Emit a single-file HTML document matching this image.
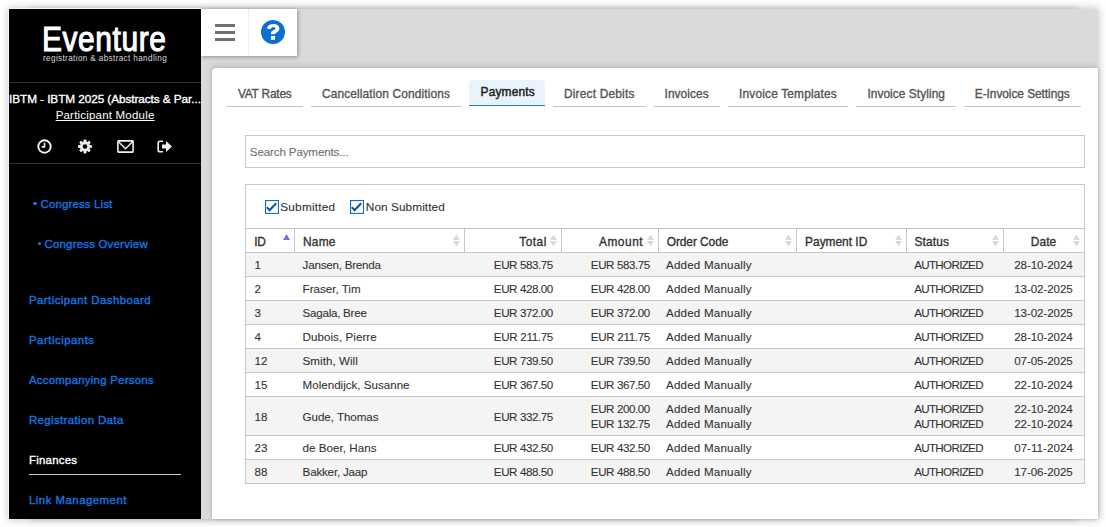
<!DOCTYPE html>
<html><head><meta charset="utf-8">
<style>
html,body{margin:0;padding:0;}
body{width:1106px;height:527px;overflow:hidden;background:#fff;position:relative;font-family:"Liberation Sans", sans-serif;}
.abs{position:absolute;}
</style></head><body>

<div class="abs" style="left:29px;top:9px;width:1049px;height:510px;background:#dadada;box-shadow:0 0 7px 0 rgba(0,0,0,.2);"></div>
<div class="abs" style="left:9px;top:9px;width:1089px;height:510px;background:#dadada;box-shadow:0 0 8px 1px rgba(0,0,0,.22);"></div>
<div class="abs" style="left:8px;top:8px;width:1px;height:511px;background:#f2f2f2;"></div>
<div class="abs" style="left:8px;top:8px;width:193px;height:1px;background:#f2f2f2;"></div>
<div class="abs" style="left:9px;top:9px;width:192px;height:510px;background:#000;overflow:hidden;">
<div class="abs" style="left:32.5px;top:9.5px;font-size:35px;transform:scaleX(0.855);letter-spacing:0.7px;transform-origin:0 0;-webkit-text-stroke:1.1px #fff;color:#fff;line-height:40px;white-space:nowrap;">Eventure</div>
<div class="abs" style="left:34px;top:45px;font-size:8.2px;color:#d8d8d8;line-height:10px;white-space:nowrap;letter-spacing:0.35px;">registration &amp; abstract handling</div>
<div class="abs" style="left:0;top:73px;width:192px;height:1px;background:#333;"></div>
<div style="position:absolute;top:79.91px;line-height:20px;font-size:11.8px;font-weight:normal;color:#fff;white-space:nowrap;left:0px;width:192px;text-align:center;letter-spacing:-0.079px;-webkit-text-stroke:0.35px #fff;text-indent:-0.079px;">IBTM - IBTM 2025 (Abstracts &amp; Par...</div>
<div style="position:absolute;top:96.32px;line-height:20px;font-size:11.5px;font-weight:normal;color:#fff;white-space:nowrap;left:0px;width:192px;text-align:center;letter-spacing:0.2px;text-indent:0.2px;"><span style="text-decoration:underline;text-decoration-skip-ink:none;">Participant Module</span></div>
<svg class="abs" style="left:28px;top:130px" width="15" height="15" viewBox="0 0 15 15"><circle cx="7.5" cy="7.5" r="6.2" fill="none" stroke="#f2f2f2" stroke-width="1.9"/><path d="M7.5 3.8 V7.9 H4.8" fill="none" stroke="#f2f2f2" stroke-width="1.6"/></svg>
<svg class="abs" style="left:69px;top:130px" width="14" height="15" viewBox="0 0 14 15"><g transform="translate(7 7.5)"><g fill="#ececec">
<rect x="-1.5" y="-7" width="3" height="14" rx="1"/><rect x="-1.5" y="-7" width="3" height="14" rx="1" transform="rotate(45)"/><rect x="-1.5" y="-7" width="3" height="14" rx="1" transform="rotate(90)"/><rect x="-1.5" y="-7" width="3" height="14" rx="1" transform="rotate(135)"/>
<circle r="5.1"/></g><circle r="2.3" fill="#000"/></g></svg>
<svg class="abs" style="left:108px;top:131px" width="17" height="13" viewBox="0 0 17 13"><rect x="0.9" y="0.9" width="15.2" height="11.2" rx="0.6" fill="none" stroke="#f0f0f0" stroke-width="1.6"/><path d="M1.3 1.6 L8.5 8.8 L15.7 1.6" fill="none" stroke="#f0f0f0" stroke-width="1.4"/></svg>
<svg class="abs" style="left:148px;top:131px" width="16" height="13" viewBox="0 0 16 13"><path d="M6 1.2 H3 Q1.2 1.2 1.2 3 V10 Q1.2 11.8 3 11.8 H6" fill="none" stroke="#f0f0f0" stroke-width="1.6"/><path d="M5 4.5 H9 V1 L15 6.5 L9 12 V8.5 H5 Z" fill="#f0f0f0"/></svg>
<div class="abs" style="left:0;top:154px;width:192px;height:1px;background:#333;"></div>
<div class="abs" style="left:24.2px;top:192.7px;width:3.6px;height:3.6px;border-radius:50%;background:#1477e0;"></div>
<div style="position:absolute;top:185.05px;line-height:20px;font-size:11.4px;font-weight:normal;color:#1477e0;white-space:nowrap;left:31.5px;letter-spacing:0.175px;-webkit-text-stroke:0.35px #1477e0;">Congress List</div>
<div class="abs" style="left:28.8px;top:232.7px;width:3.6px;height:3.6px;border-radius:50%;background:#1477e0;"></div>
<div style="position:absolute;top:225.05px;line-height:20px;font-size:11.4px;font-weight:normal;color:#1477e0;white-space:nowrap;left:35.5px;letter-spacing:0.233px;-webkit-text-stroke:0.35px #1477e0;">Congress Overview</div>
<div style="position:absolute;top:281.05px;line-height:20px;font-size:11.4px;font-weight:normal;color:#1477e0;white-space:nowrap;left:20px;letter-spacing:0.445px;-webkit-text-stroke:0.35px #1477e0;">Participant Dashboard</div>
<div style="position:absolute;top:321.05px;line-height:20px;font-size:11.4px;font-weight:normal;color:#1477e0;white-space:nowrap;left:20px;letter-spacing:0.504px;-webkit-text-stroke:0.35px #1477e0;">Participants</div>
<div style="position:absolute;top:361.05px;line-height:20px;font-size:11.4px;font-weight:normal;color:#1477e0;white-space:nowrap;left:20px;letter-spacing:0.255px;-webkit-text-stroke:0.35px #1477e0;">Accompanying Persons</div>
<div style="position:absolute;top:401.05px;line-height:20px;font-size:11.4px;font-weight:normal;color:#1477e0;white-space:nowrap;left:20px;letter-spacing:0.389px;-webkit-text-stroke:0.35px #1477e0;">Registration Data</div>
<div style="position:absolute;top:441.05px;line-height:20px;font-size:11.4px;font-weight:normal;color:#fff;white-space:nowrap;left:20px;letter-spacing:0.249px;-webkit-text-stroke:0.35px #fff;">Finances</div>
<div style="position:absolute;top:481.05px;line-height:20px;font-size:11.4px;font-weight:normal;color:#1477e0;white-space:nowrap;left:20px;letter-spacing:0.491px;-webkit-text-stroke:0.35px #1477e0;">Link Management</div>
<div class="abs" style="left:20px;top:465px;width:152px;height:1px;background:#ccc;"></div>
</div>
<div class="abs" style="left:201px;top:9px;width:96px;height:47px;background:#fff;box-shadow:1px 1px 4px rgba(0,0,0,.35);"></div>
<div class="abs" style="left:248px;top:9px;width:1px;height:47px;background:#f0f0f0;"></div>
<div class="abs" style="left:215px;top:24px;width:20px;height:3px;background:#707070;"></div>
<div class="abs" style="left:215px;top:31px;width:20px;height:3px;background:#707070;"></div>
<div class="abs" style="left:215px;top:38px;width:20px;height:3px;background:#707070;"></div>
<svg class="abs" style="left:261px;top:20px" width="24" height="24" viewBox="0 0 24 24"><circle cx="12" cy="12" r="12" fill="#0a6fd0"/><path d="M5.9 8.4 C6.4 5.5 8.8 3.9 12.2 3.9 C15.8 3.9 18.4 5.9 18.4 8.6 C18.4 10.7 17.0 11.8 15.6 12.6 C14.5 13.2 14.2 13.6 14.2 14.2 H9.9 V13.6 C9.9 12.0 10.9 11.1 12.4 10.3 C13.6 9.7 14.3 9.3 14.3 8.5 C14.3 7.5 13.4 6.9 12.2 6.9 C11.0 6.9 10.1 7.6 9.5 9.2 Z" fill="#fff"/><rect x="9.9" y="16" width="4.2" height="3.8" fill="#fff"/></svg>
<div class="abs" style="left:212px;top:68px;width:886px;height:451px;background:#fff;border-top-left-radius:4px;box-shadow:0 0 3px rgba(0,0,0,.16), 0 -2px 6px rgba(0,0,0,.12);"></div>
<div class="abs" style="left:227px;top:106px;width:76px;height:1px;background:#c4c4c4;"></div>
<div style="position:absolute;top:83.68px;line-height:20px;font-size:11.9px;font-weight:normal;color:#555;white-space:nowrap;left:237.89999999999998px;letter-spacing:-0.207px;-webkit-text-stroke:0.35px #555;">VAT Rates</div>
<div class="abs" style="left:311px;top:106px;width:150px;height:1px;background:#c4c4c4;"></div>
<div style="position:absolute;top:83.68px;line-height:20px;font-size:11.9px;font-weight:normal;color:#555;white-space:nowrap;left:322.0px;letter-spacing:0.135px;-webkit-text-stroke:0.35px #555;">Cancellation Conditions</div>
<div class="abs" style="left:469px;top:80px;width:76px;height:25px;background:#eaf3fc;border-radius:4px 4px 0 0;"></div>
<div class="abs" style="left:469px;top:105px;width:76px;height:1px;background:#1f7fe0;"></div>
<div style="position:absolute;top:82.48px;line-height:20px;font-size:11.9px;font-weight:normal;color:#222;white-space:nowrap;left:480.59999999999997px;letter-spacing:0.170px;-webkit-text-stroke:0.45px #222;">Payments</div>
<div class="abs" style="left:553px;top:106px;width:93px;height:1px;background:#c4c4c4;"></div>
<div style="position:absolute;top:83.68px;line-height:20px;font-size:11.9px;font-weight:normal;color:#555;white-space:nowrap;left:563.9000000000001px;letter-spacing:0.199px;-webkit-text-stroke:0.35px #555;">Direct Debits</div>
<div class="abs" style="left:654px;top:106px;width:66px;height:1px;background:#c4c4c4;"></div>
<div style="position:absolute;top:83.68px;line-height:20px;font-size:11.9px;font-weight:normal;color:#555;white-space:nowrap;left:664.5px;letter-spacing:0.078px;-webkit-text-stroke:0.35px #555;">Invoices</div>
<div class="abs" style="left:728px;top:106px;width:120px;height:1px;background:#c4c4c4;"></div>
<div style="position:absolute;top:83.68px;line-height:20px;font-size:11.9px;font-weight:normal;color:#555;white-space:nowrap;left:739.0px;letter-spacing:0.179px;-webkit-text-stroke:0.35px #555;">Invoice Templates</div>
<div class="abs" style="left:856px;top:106px;width:100px;height:1px;background:#c4c4c4;"></div>
<div style="position:absolute;top:83.68px;line-height:20px;font-size:11.9px;font-weight:normal;color:#555;white-space:nowrap;left:867.4000000000001px;letter-spacing:0.062px;-webkit-text-stroke:0.35px #555;">Invoice Styling</div>
<div class="abs" style="left:964px;top:106px;width:117px;height:1px;background:#c4c4c4;"></div>
<div style="position:absolute;top:83.68px;line-height:20px;font-size:11.9px;font-weight:normal;color:#555;white-space:nowrap;left:974.8000000000001px;letter-spacing:-0.054px;-webkit-text-stroke:0.35px #555;">E-Invoice Settings</div>
<div class="abs" style="left:245px;top:135px;width:838px;height:31px;border:1px solid #c8c8c8;background:#fff;"></div>
<div style="position:absolute;top:141.98px;line-height:20px;font-size:11.6px;font-weight:normal;color:#707070;white-space:nowrap;left:249.8px;letter-spacing:-0.137px;-webkit-text-stroke:0.1px #707070;">Search Payments...</div>
<div class="abs" style="left:245px;top:184px;width:838px;height:298px;border:1px solid #c8c8c8;background:#fff;"></div>
<svg class="abs" style="left:265px;top:200px" width="14" height="14" viewBox="0 0 14 14"><rect x="0.55" y="0.55" width="12.9" height="12.9" fill="#fff" stroke="#0a70d0" stroke-width="1.1"/><path d="M1.9 7.2 L4.5 10.3 L11.2 3.3" fill="none" stroke="#0c4f94" stroke-width="2"/></svg>
<div style="position:absolute;top:196.71px;line-height:20px;font-size:11.8px;font-weight:normal;color:#333;white-space:nowrap;left:280.3px;letter-spacing:0.196px;-webkit-text-stroke:0.1px #333;">Submitted</div>
<svg class="abs" style="left:350px;top:200px" width="14" height="14" viewBox="0 0 14 14"><rect x="0.55" y="0.55" width="12.9" height="12.9" fill="#fff" stroke="#0a70d0" stroke-width="1.1"/><path d="M1.9 7.2 L4.5 10.3 L11.2 3.3" fill="none" stroke="#0c4f94" stroke-width="2"/></svg>
<div style="position:absolute;top:196.71px;line-height:20px;font-size:11.8px;font-weight:normal;color:#333;white-space:nowrap;left:365.8px;letter-spacing:0.079px;-webkit-text-stroke:0.1px #333;">Non Submitted</div>
<div class="abs" style="left:245px;top:228px;width:840px;height:1px;background:#c4c4c4;"></div>
<div class="abs" style="left:294px;top:228px;width:1px;height:24px;background:#c6c6c6;"></div>
<div class="abs" style="left:464px;top:228px;width:1px;height:24px;background:#c6c6c6;"></div>
<div class="abs" style="left:561px;top:228px;width:1px;height:24px;background:#c6c6c6;"></div>
<div class="abs" style="left:658px;top:228px;width:1px;height:24px;background:#c6c6c6;"></div>
<div class="abs" style="left:796px;top:228px;width:1px;height:24px;background:#c6c6c6;"></div>
<div class="abs" style="left:906px;top:228px;width:1px;height:24px;background:#c6c6c6;"></div>
<div class="abs" style="left:1003px;top:228px;width:1px;height:24px;background:#c6c6c6;"></div>
<div style="position:absolute;top:231.78px;line-height:20px;font-size:11.9px;font-weight:normal;color:#333;white-space:nowrap;left:254.2px;letter-spacing:-0.300px;-webkit-text-stroke:0.35px #333;">ID</div>
<svg class="abs" style="left:283.0px;top:234px" width="7" height="6" viewBox="0 0 7 6"><path d="M0 6 L3.5 0 L7 6Z" fill="#7073d8"/></svg>
<div style="position:absolute;top:231.78px;line-height:20px;font-size:11.9px;font-weight:normal;color:#333;white-space:nowrap;left:303.0px;letter-spacing:0.219px;-webkit-text-stroke:0.35px #333;">Name</div>
<svg class="abs" style="left:452.8px;top:234px" width="7" height="13" viewBox="0 0 7 13"><path d="M0 6 L3.5 0.5 L7 6Z M0 7 L3.5 12.5 L7 7Z" fill="#d9d9d9"/></svg>
<div style="position:absolute;top:231.78px;line-height:20px;font-size:11.9px;font-weight:normal;color:#333;white-space:nowrap;right:559.23422265625px;letter-spacing:0.466px;-webkit-text-stroke:0.35px #333;">Total</div>
<svg class="abs" style="left:549.8px;top:234px" width="7" height="13" viewBox="0 0 7 13"><path d="M0 6 L3.5 0.5 L7 6Z M0 7 L3.5 12.5 L7 7Z" fill="#d9d9d9"/></svg>
<div style="position:absolute;top:231.78px;line-height:20px;font-size:11.9px;font-weight:normal;color:#333;white-space:nowrap;right:462.862446875px;letter-spacing:0.538px;-webkit-text-stroke:0.35px #333;">Amount</div>
<svg class="abs" style="left:646.8px;top:234px" width="7" height="13" viewBox="0 0 7 13"><path d="M0 6 L3.5 0.5 L7 6Z M0 7 L3.5 12.5 L7 7Z" fill="#d9d9d9"/></svg>
<div style="position:absolute;top:231.78px;line-height:20px;font-size:11.9px;font-weight:normal;color:#333;white-space:nowrap;left:666.7px;letter-spacing:-0.053px;-webkit-text-stroke:0.35px #333;">Order Code</div>
<svg class="abs" style="left:784.8px;top:234px" width="7" height="13" viewBox="0 0 7 13"><path d="M0 6 L3.5 0.5 L7 6Z M0 7 L3.5 12.5 L7 7Z" fill="#d9d9d9"/></svg>
<div style="position:absolute;top:231.78px;line-height:20px;font-size:11.9px;font-weight:normal;color:#333;white-space:nowrap;left:805.1px;letter-spacing:0.004px;-webkit-text-stroke:0.35px #333;">Payment ID</div>
<svg class="abs" style="left:895.0px;top:234px" width="7" height="13" viewBox="0 0 7 13"><path d="M0 6 L3.5 0.5 L7 6Z M0 7 L3.5 12.5 L7 7Z" fill="#d9d9d9"/></svg>
<div style="position:absolute;top:231.78px;line-height:20px;font-size:11.9px;font-weight:normal;color:#333;white-space:nowrap;left:914.4px;letter-spacing:0.153px;-webkit-text-stroke:0.35px #333;">Status</div>
<svg class="abs" style="left:991.9px;top:234px" width="7" height="13" viewBox="0 0 7 13"><path d="M0 6 L3.5 0.5 L7 6Z M0 7 L3.5 12.5 L7 7Z" fill="#d9d9d9"/></svg>
<div style="position:absolute;top:231.78px;line-height:20px;font-size:11.9px;font-weight:normal;color:#333;white-space:nowrap;left:1003px;width:81px;text-align:center;letter-spacing:0.121px;-webkit-text-stroke:0.35px #333;text-indent:0.121px;">Date</div>
<svg class="abs" style="left:1073.0px;top:234px" width="7" height="13" viewBox="0 0 7 13"><path d="M0 6 L3.5 0.5 L7 6Z M0 7 L3.5 12.5 L7 7Z" fill="#d9d9d9"/></svg>
<div class="abs" style="left:246px;top:252px;width:838px;height:24px;background:#f4f4f4;"></div>
<div class="abs" style="left:245px;top:252px;width:840px;height:1px;background:#c6c6c6;"></div>
<div style="position:absolute;top:254.98px;line-height:20px;font-size:11.6px;font-weight:normal;color:#333;white-space:nowrap;left:254.5px;-webkit-text-stroke:0.1px #333;">1</div>
<div style="position:absolute;top:254.98px;line-height:20px;font-size:11.6px;font-weight:normal;color:#333;white-space:nowrap;left:302.6px;letter-spacing:-0.220px;-webkit-text-stroke:0.1px #333;">Jansen, Brenda</div>
<div style="position:absolute;top:254.98px;line-height:20px;font-size:11.6px;font-weight:normal;color:#333;white-space:nowrap;right:553.1105138888889px;letter-spacing:-0.411px;-webkit-text-stroke:0.1px #333;">EUR 583.75</div>
<div style="position:absolute;top:254.98px;line-height:20px;font-size:11.6px;font-weight:normal;color:#333;white-space:nowrap;right:456.11051388888893px;letter-spacing:-0.411px;-webkit-text-stroke:0.1px #333;">EUR 583.75</div>
<div style="position:absolute;top:254.98px;line-height:20px;font-size:11.6px;font-weight:normal;color:#333;white-space:nowrap;left:666.0px;letter-spacing:0.193px;-webkit-text-stroke:0.1px #333;">Added Manually</div>
<div style="position:absolute;top:254.98px;line-height:20px;font-size:11.6px;font-weight:normal;color:#333;white-space:nowrap;left:914.2px;letter-spacing:-0.667px;-webkit-text-stroke:0.1px #333;">AUTHORIZED</div>
<div style="position:absolute;top:254.98px;line-height:20px;font-size:11.6px;font-weight:normal;color:#333;white-space:nowrap;left:1003px;width:81px;text-align:center;letter-spacing:-0.071px;-webkit-text-stroke:0.1px #333;text-indent:-0.071px;">28-10-2024</div>
<div class="abs" style="left:246px;top:276px;width:838px;height:24px;background:#fff;"></div>
<div class="abs" style="left:245px;top:276px;width:840px;height:1px;background:#c6c6c6;"></div>
<div style="position:absolute;top:278.98px;line-height:20px;font-size:11.6px;font-weight:normal;color:#333;white-space:nowrap;left:254.5px;-webkit-text-stroke:0.1px #333;">2</div>
<div style="position:absolute;top:278.98px;line-height:20px;font-size:11.6px;font-weight:normal;color:#333;white-space:nowrap;left:302.6px;letter-spacing:-0.001px;-webkit-text-stroke:0.1px #333;">Fraser, Tim</div>
<div style="position:absolute;top:278.98px;line-height:20px;font-size:11.6px;font-weight:normal;color:#333;white-space:nowrap;right:553.1105138888889px;letter-spacing:-0.411px;-webkit-text-stroke:0.1px #333;">EUR 428.00</div>
<div style="position:absolute;top:278.98px;line-height:20px;font-size:11.6px;font-weight:normal;color:#333;white-space:nowrap;right:456.11051388888893px;letter-spacing:-0.411px;-webkit-text-stroke:0.1px #333;">EUR 428.00</div>
<div style="position:absolute;top:278.98px;line-height:20px;font-size:11.6px;font-weight:normal;color:#333;white-space:nowrap;left:666.0px;letter-spacing:0.193px;-webkit-text-stroke:0.1px #333;">Added Manually</div>
<div style="position:absolute;top:278.98px;line-height:20px;font-size:11.6px;font-weight:normal;color:#333;white-space:nowrap;left:914.2px;letter-spacing:-0.667px;-webkit-text-stroke:0.1px #333;">AUTHORIZED</div>
<div style="position:absolute;top:278.98px;line-height:20px;font-size:11.6px;font-weight:normal;color:#333;white-space:nowrap;left:1003px;width:81px;text-align:center;letter-spacing:-0.071px;-webkit-text-stroke:0.1px #333;text-indent:-0.071px;">13-02-2025</div>
<div class="abs" style="left:246px;top:300px;width:838px;height:24px;background:#f4f4f4;"></div>
<div class="abs" style="left:245px;top:300px;width:840px;height:1px;background:#c6c6c6;"></div>
<div style="position:absolute;top:302.98px;line-height:20px;font-size:11.6px;font-weight:normal;color:#333;white-space:nowrap;left:254.5px;-webkit-text-stroke:0.1px #333;">3</div>
<div style="position:absolute;top:302.98px;line-height:20px;font-size:11.6px;font-weight:normal;color:#333;white-space:nowrap;left:302.6px;letter-spacing:-0.252px;-webkit-text-stroke:0.1px #333;">Sagala, Bree</div>
<div style="position:absolute;top:302.98px;line-height:20px;font-size:11.6px;font-weight:normal;color:#333;white-space:nowrap;right:553.1105138888889px;letter-spacing:-0.411px;-webkit-text-stroke:0.1px #333;">EUR 372.00</div>
<div style="position:absolute;top:302.98px;line-height:20px;font-size:11.6px;font-weight:normal;color:#333;white-space:nowrap;right:456.11051388888893px;letter-spacing:-0.411px;-webkit-text-stroke:0.1px #333;">EUR 372.00</div>
<div style="position:absolute;top:302.98px;line-height:20px;font-size:11.6px;font-weight:normal;color:#333;white-space:nowrap;left:666.0px;letter-spacing:0.193px;-webkit-text-stroke:0.1px #333;">Added Manually</div>
<div style="position:absolute;top:302.98px;line-height:20px;font-size:11.6px;font-weight:normal;color:#333;white-space:nowrap;left:914.2px;letter-spacing:-0.667px;-webkit-text-stroke:0.1px #333;">AUTHORIZED</div>
<div style="position:absolute;top:302.98px;line-height:20px;font-size:11.6px;font-weight:normal;color:#333;white-space:nowrap;left:1003px;width:81px;text-align:center;letter-spacing:-0.071px;-webkit-text-stroke:0.1px #333;text-indent:-0.071px;">13-02-2025</div>
<div class="abs" style="left:246px;top:324px;width:838px;height:24px;background:#fff;"></div>
<div class="abs" style="left:245px;top:324px;width:840px;height:1px;background:#c6c6c6;"></div>
<div style="position:absolute;top:326.98px;line-height:20px;font-size:11.6px;font-weight:normal;color:#333;white-space:nowrap;left:254.5px;-webkit-text-stroke:0.1px #333;">4</div>
<div style="position:absolute;top:326.98px;line-height:20px;font-size:11.6px;font-weight:normal;color:#333;white-space:nowrap;left:302.6px;letter-spacing:0.046px;-webkit-text-stroke:0.1px #333;">Dubois, Pierre</div>
<div style="position:absolute;top:326.98px;line-height:20px;font-size:11.6px;font-weight:normal;color:#333;white-space:nowrap;right:553.0148541666667px;letter-spacing:-0.315px;-webkit-text-stroke:0.1px #333;">EUR 211.75</div>
<div style="position:absolute;top:326.98px;line-height:20px;font-size:11.6px;font-weight:normal;color:#333;white-space:nowrap;right:456.01485416666674px;letter-spacing:-0.315px;-webkit-text-stroke:0.1px #333;">EUR 211.75</div>
<div style="position:absolute;top:326.98px;line-height:20px;font-size:11.6px;font-weight:normal;color:#333;white-space:nowrap;left:666.0px;letter-spacing:0.193px;-webkit-text-stroke:0.1px #333;">Added Manually</div>
<div style="position:absolute;top:326.98px;line-height:20px;font-size:11.6px;font-weight:normal;color:#333;white-space:nowrap;left:914.2px;letter-spacing:-0.667px;-webkit-text-stroke:0.1px #333;">AUTHORIZED</div>
<div style="position:absolute;top:326.98px;line-height:20px;font-size:11.6px;font-weight:normal;color:#333;white-space:nowrap;left:1003px;width:81px;text-align:center;letter-spacing:-0.071px;-webkit-text-stroke:0.1px #333;text-indent:-0.071px;">28-10-2024</div>
<div class="abs" style="left:246px;top:348px;width:838px;height:24px;background:#f4f4f4;"></div>
<div class="abs" style="left:245px;top:348px;width:840px;height:1px;background:#c6c6c6;"></div>
<div style="position:absolute;top:350.98px;line-height:20px;font-size:11.6px;font-weight:normal;color:#333;white-space:nowrap;left:254.5px;-webkit-text-stroke:0.1px #333;">12</div>
<div style="position:absolute;top:350.98px;line-height:20px;font-size:11.6px;font-weight:normal;color:#333;white-space:nowrap;left:302.6px;letter-spacing:0.042px;-webkit-text-stroke:0.1px #333;">Smith, Will</div>
<div style="position:absolute;top:350.98px;line-height:20px;font-size:11.6px;font-weight:normal;color:#333;white-space:nowrap;right:553.1105138888889px;letter-spacing:-0.411px;-webkit-text-stroke:0.1px #333;">EUR 739.50</div>
<div style="position:absolute;top:350.98px;line-height:20px;font-size:11.6px;font-weight:normal;color:#333;white-space:nowrap;right:456.11051388888893px;letter-spacing:-0.411px;-webkit-text-stroke:0.1px #333;">EUR 739.50</div>
<div style="position:absolute;top:350.98px;line-height:20px;font-size:11.6px;font-weight:normal;color:#333;white-space:nowrap;left:666.0px;letter-spacing:0.193px;-webkit-text-stroke:0.1px #333;">Added Manually</div>
<div style="position:absolute;top:350.98px;line-height:20px;font-size:11.6px;font-weight:normal;color:#333;white-space:nowrap;left:914.2px;letter-spacing:-0.667px;-webkit-text-stroke:0.1px #333;">AUTHORIZED</div>
<div style="position:absolute;top:350.98px;line-height:20px;font-size:11.6px;font-weight:normal;color:#333;white-space:nowrap;left:1003px;width:81px;text-align:center;letter-spacing:-0.071px;-webkit-text-stroke:0.1px #333;text-indent:-0.071px;">07-05-2025</div>
<div class="abs" style="left:246px;top:372px;width:838px;height:24px;background:#fff;"></div>
<div class="abs" style="left:245px;top:372px;width:840px;height:1px;background:#c6c6c6;"></div>
<div style="position:absolute;top:374.98px;line-height:20px;font-size:11.6px;font-weight:normal;color:#333;white-space:nowrap;left:254.5px;-webkit-text-stroke:0.1px #333;">15</div>
<div style="position:absolute;top:374.98px;line-height:20px;font-size:11.6px;font-weight:normal;color:#333;white-space:nowrap;left:302.6px;letter-spacing:-0.002px;-webkit-text-stroke:0.1px #333;">Molendijck, Susanne</div>
<div style="position:absolute;top:374.98px;line-height:20px;font-size:11.6px;font-weight:normal;color:#333;white-space:nowrap;right:553.1105138888889px;letter-spacing:-0.411px;-webkit-text-stroke:0.1px #333;">EUR 367.50</div>
<div style="position:absolute;top:374.98px;line-height:20px;font-size:11.6px;font-weight:normal;color:#333;white-space:nowrap;right:456.11051388888893px;letter-spacing:-0.411px;-webkit-text-stroke:0.1px #333;">EUR 367.50</div>
<div style="position:absolute;top:374.98px;line-height:20px;font-size:11.6px;font-weight:normal;color:#333;white-space:nowrap;left:666.0px;letter-spacing:0.193px;-webkit-text-stroke:0.1px #333;">Added Manually</div>
<div style="position:absolute;top:374.98px;line-height:20px;font-size:11.6px;font-weight:normal;color:#333;white-space:nowrap;left:914.2px;letter-spacing:-0.667px;-webkit-text-stroke:0.1px #333;">AUTHORIZED</div>
<div style="position:absolute;top:374.98px;line-height:20px;font-size:11.6px;font-weight:normal;color:#333;white-space:nowrap;left:1003px;width:81px;text-align:center;letter-spacing:-0.071px;-webkit-text-stroke:0.1px #333;text-indent:-0.071px;">22-10-2024</div>
<div class="abs" style="left:246px;top:396px;width:838px;height:39px;background:#f4f4f4;"></div>
<div class="abs" style="left:245px;top:396px;width:840px;height:1px;background:#c6c6c6;"></div>
<div style="position:absolute;top:406.98px;line-height:20px;font-size:11.6px;font-weight:normal;color:#333;white-space:nowrap;left:254.5px;-webkit-text-stroke:0.1px #333;">18</div>
<div style="position:absolute;top:406.98px;line-height:20px;font-size:11.6px;font-weight:normal;color:#333;white-space:nowrap;left:302.6px;letter-spacing:-0.047px;-webkit-text-stroke:0.1px #333;">Gude, Thomas</div>
<div style="position:absolute;top:406.98px;line-height:20px;font-size:11.6px;font-weight:normal;color:#333;white-space:nowrap;right:553.1105138888889px;letter-spacing:-0.411px;-webkit-text-stroke:0.1px #333;">EUR 332.75</div>
<div style="position:absolute;top:398.98px;line-height:20px;font-size:11.6px;font-weight:normal;color:#333;white-space:nowrap;right:456.11051388888893px;letter-spacing:-0.411px;-webkit-text-stroke:0.1px #333;">EUR 200.00</div>
<div style="position:absolute;top:398.98px;line-height:20px;font-size:11.6px;font-weight:normal;color:#333;white-space:nowrap;left:666.0px;letter-spacing:0.193px;-webkit-text-stroke:0.1px #333;">Added Manually</div>
<div style="position:absolute;top:398.98px;line-height:20px;font-size:11.6px;font-weight:normal;color:#333;white-space:nowrap;left:914.2px;letter-spacing:-0.667px;-webkit-text-stroke:0.1px #333;">AUTHORIZED</div>
<div style="position:absolute;top:398.98px;line-height:20px;font-size:11.6px;font-weight:normal;color:#333;white-space:nowrap;left:1003px;width:81px;text-align:center;letter-spacing:-0.071px;-webkit-text-stroke:0.1px #333;text-indent:-0.071px;">22-10-2024</div>
<div style="position:absolute;top:413.98px;line-height:20px;font-size:11.6px;font-weight:normal;color:#333;white-space:nowrap;right:456.11051388888893px;letter-spacing:-0.411px;-webkit-text-stroke:0.1px #333;">EUR 132.75</div>
<div style="position:absolute;top:413.98px;line-height:20px;font-size:11.6px;font-weight:normal;color:#333;white-space:nowrap;left:666.0px;letter-spacing:0.193px;-webkit-text-stroke:0.1px #333;">Added Manually</div>
<div style="position:absolute;top:413.98px;line-height:20px;font-size:11.6px;font-weight:normal;color:#333;white-space:nowrap;left:914.2px;letter-spacing:-0.667px;-webkit-text-stroke:0.1px #333;">AUTHORIZED</div>
<div style="position:absolute;top:413.98px;line-height:20px;font-size:11.6px;font-weight:normal;color:#333;white-space:nowrap;left:1003px;width:81px;text-align:center;letter-spacing:-0.071px;-webkit-text-stroke:0.1px #333;text-indent:-0.071px;">22-10-2024</div>
<div class="abs" style="left:246px;top:435px;width:838px;height:24px;background:#fff;"></div>
<div class="abs" style="left:245px;top:435px;width:840px;height:1px;background:#c6c6c6;"></div>
<div style="position:absolute;top:437.98px;line-height:20px;font-size:11.6px;font-weight:normal;color:#333;white-space:nowrap;left:254.5px;-webkit-text-stroke:0.1px #333;">23</div>
<div style="position:absolute;top:437.98px;line-height:20px;font-size:11.6px;font-weight:normal;color:#333;white-space:nowrap;left:302.6px;letter-spacing:0.040px;-webkit-text-stroke:0.1px #333;">de Boer, Hans</div>
<div style="position:absolute;top:437.98px;line-height:20px;font-size:11.6px;font-weight:normal;color:#333;white-space:nowrap;right:553.1105138888889px;letter-spacing:-0.411px;-webkit-text-stroke:0.1px #333;">EUR 432.50</div>
<div style="position:absolute;top:437.98px;line-height:20px;font-size:11.6px;font-weight:normal;color:#333;white-space:nowrap;right:456.11051388888893px;letter-spacing:-0.411px;-webkit-text-stroke:0.1px #333;">EUR 432.50</div>
<div style="position:absolute;top:437.98px;line-height:20px;font-size:11.6px;font-weight:normal;color:#333;white-space:nowrap;left:666.0px;letter-spacing:0.193px;-webkit-text-stroke:0.1px #333;">Added Manually</div>
<div style="position:absolute;top:437.98px;line-height:20px;font-size:11.6px;font-weight:normal;color:#333;white-space:nowrap;left:914.2px;letter-spacing:-0.667px;-webkit-text-stroke:0.1px #333;">AUTHORIZED</div>
<div style="position:absolute;top:437.98px;line-height:20px;font-size:11.6px;font-weight:normal;color:#333;white-space:nowrap;left:1003px;width:81px;text-align:center;letter-spacing:0.025px;-webkit-text-stroke:0.1px #333;text-indent:0.025px;">07-11-2024</div>
<div class="abs" style="left:246px;top:459px;width:838px;height:24px;background:#f4f4f4;"></div>
<div class="abs" style="left:245px;top:459px;width:840px;height:1px;background:#c6c6c6;"></div>
<div style="position:absolute;top:461.98px;line-height:20px;font-size:11.6px;font-weight:normal;color:#333;white-space:nowrap;left:254.5px;-webkit-text-stroke:0.1px #333;">88</div>
<div style="position:absolute;top:461.98px;line-height:20px;font-size:11.6px;font-weight:normal;color:#333;white-space:nowrap;left:302.6px;letter-spacing:-0.188px;-webkit-text-stroke:0.1px #333;">Bakker, Jaap</div>
<div style="position:absolute;top:461.98px;line-height:20px;font-size:11.6px;font-weight:normal;color:#333;white-space:nowrap;right:553.1105138888889px;letter-spacing:-0.411px;-webkit-text-stroke:0.1px #333;">EUR 488.50</div>
<div style="position:absolute;top:461.98px;line-height:20px;font-size:11.6px;font-weight:normal;color:#333;white-space:nowrap;right:456.11051388888893px;letter-spacing:-0.411px;-webkit-text-stroke:0.1px #333;">EUR 488.50</div>
<div style="position:absolute;top:461.98px;line-height:20px;font-size:11.6px;font-weight:normal;color:#333;white-space:nowrap;left:666.0px;letter-spacing:0.193px;-webkit-text-stroke:0.1px #333;">Added Manually</div>
<div style="position:absolute;top:461.98px;line-height:20px;font-size:11.6px;font-weight:normal;color:#333;white-space:nowrap;left:914.2px;letter-spacing:-0.667px;-webkit-text-stroke:0.1px #333;">AUTHORIZED</div>
<div style="position:absolute;top:461.98px;line-height:20px;font-size:11.6px;font-weight:normal;color:#333;white-space:nowrap;left:1003px;width:81px;text-align:center;letter-spacing:-0.071px;-webkit-text-stroke:0.1px #333;text-indent:-0.071px;">17-06-2025</div>
<div class="abs" style="left:245px;top:483px;width:840px;height:1px;background:#c4c4c4;"></div>
</body></html>
